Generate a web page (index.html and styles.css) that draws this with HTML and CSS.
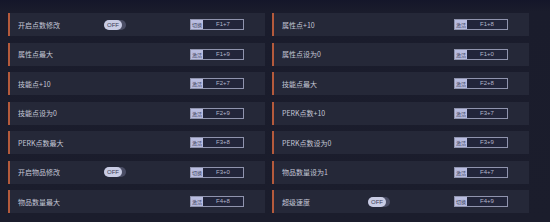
FILE: index.html
```html
<!DOCTYPE html>
<html lang="zh-CN">
<head>
    <meta charset="UTF-8">
    <title>修改器</title>
    <link rel="stylesheet" href="styles.css">
</head>
<body>
    <div class="panel">
        <div class="option-grid">
            <div class="row">
                <span class="label">开启点数修改</span>
                <span class="toggle"><span class="knob">OFF</span></span>
                <span class="hotkey"><span class="mode">切换</span><span class="key">F1+7</span></span>
            </div>
            <div class="row">
                <span class="label">属性点+10</span>
                <span class="hotkey"><span class="mode">激活</span><span class="key">F1+8</span></span>
            </div>
            <div class="row">
                <span class="label">属性点最大</span>
                <span class="hotkey"><span class="mode">激活</span><span class="key">F1+9</span></span>
            </div>
            <div class="row">
                <span class="label">属性点设为0</span>
                <span class="hotkey"><span class="mode">激活</span><span class="key">F1+0</span></span>
            </div>
            <div class="row">
                <span class="label">技能点+10</span>
                <span class="hotkey"><span class="mode">激活</span><span class="key">F2+7</span></span>
            </div>
            <div class="row">
                <span class="label">技能点最大</span>
                <span class="hotkey"><span class="mode">激活</span><span class="key">F2+8</span></span>
            </div>
            <div class="row">
                <span class="label">技能点设为0</span>
                <span class="hotkey"><span class="mode">激活</span><span class="key">F2+9</span></span>
            </div>
            <div class="row">
                <span class="label">PERK点数+10</span>
                <span class="hotkey"><span class="mode">激活</span><span class="key">F3+7</span></span>
            </div>
            <div class="row">
                <span class="label">PERK点数最大</span>
                <span class="hotkey"><span class="mode">激活</span><span class="key">F3+8</span></span>
            </div>
            <div class="row">
                <span class="label">PERK点数设为0</span>
                <span class="hotkey"><span class="mode">激活</span><span class="key">F3+9</span></span>
            </div>
            <div class="row">
                <span class="label">开启物品修改</span>
                <span class="toggle"><span class="knob">OFF</span></span>
                <span class="hotkey"><span class="mode">切换</span><span class="key">F3+0</span></span>
            </div>
            <div class="row">
                <span class="label">物品数量设为1</span>
                <span class="hotkey"><span class="mode">激活</span><span class="key">F4+7</span></span>
            </div>
            <div class="row">
                <span class="label">物品数量最大</span>
                <span class="hotkey"><span class="mode">激活</span><span class="key">F4+8</span></span>
            </div>
            <div class="row">
                <span class="label">超级速度</span>
                <span class="toggle"><span class="knob">OFF</span></span>
                <span class="hotkey"><span class="mode">切换</span><span class="key">F4+9</span></span>
            </div>
        </div>
    </div>
</body>
</html>
```

FILE: styles.css
```css
* {
    margin: 0;
    padding: 0;
    box-sizing: border-box;
}

html, body {
    height: 100%;
}

body {
    font-family: "Noto Sans CJK SC", "Noto Sans", sans-serif;
    background: linear-gradient(180deg, #14162a 0px, #1a1c2c 12px, #1b1d2c 100%);
    overflow: hidden;
}

.panel {
    padding: 13px 0 0 8px;
    width: 529px;
}

.option-grid {
    display: grid;
    grid-template-columns: 257px 257px;
    grid-auto-rows: 23px;
    column-gap: 7px;
    row-gap: 6.5px;
}

.row {
    display: flex;
    align-items: center;
    background: #252838;
    border-left: 2px solid #b45a3c;
    padding: 0 21px 0 8px;
}

.label {
    width: 86px;
    font-size: 7px;
    color: #c4c7d6;
    white-space: nowrap;
}

.toggle {
    width: 22px;
    height: 10px;
    border-radius: 5px;
    background: #4a4d64;
    display: flex;
}

.knob {
    width: 18px;
    height: 10px;
    border-radius: 5px;
    background: #c9cce4;
    color: #3a3d55;
    font-family: "Liberation Sans", sans-serif;
    font-size: 6px;
    line-height: 10px;
    text-align: center;
}

.hotkey {
    margin-left: auto;
    width: 54px;
    height: 11px;
    display: flex;
    border: 1px solid #9094ae;
    background: #22253a;
}

.mode {
    width: 12px;
    background: #b9bde0;
    color: #3c3f5a;
    font-size: 5px;
    line-height: 9px;
    text-align: center;
    white-space: nowrap;
    overflow: hidden;
}

.key {
    flex: 1;
    color: #b3b6cb;
    font-family: "Liberation Sans", sans-serif;
    font-size: 6px;
    line-height: 9px;
    text-align: center;
}
```
